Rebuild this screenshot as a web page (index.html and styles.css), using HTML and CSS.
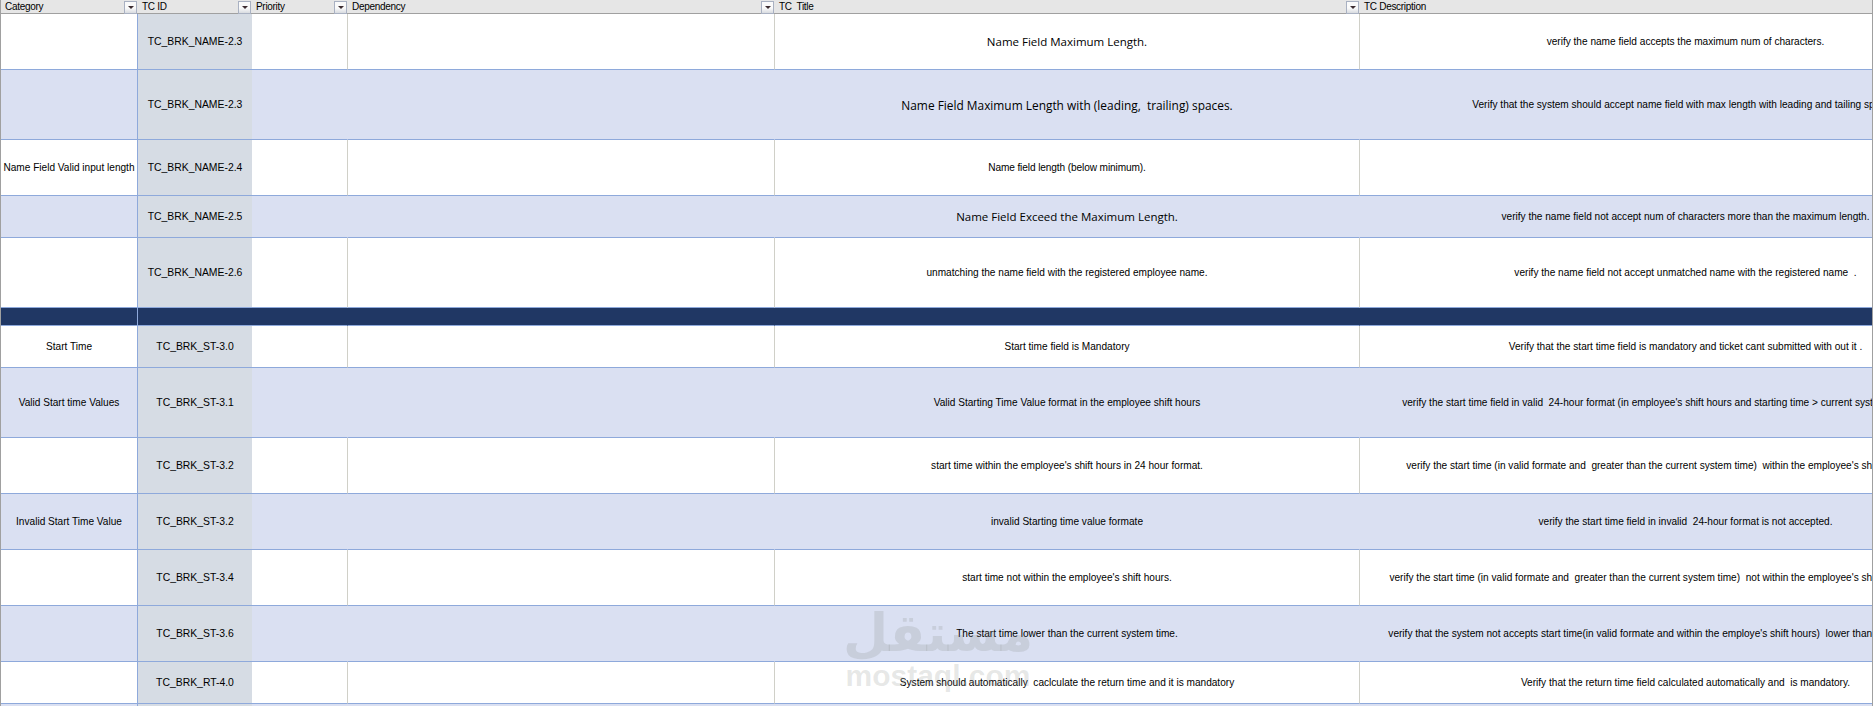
FILE: index.html
```html
<!DOCTYPE html>
<html lang="en">
<head>
<meta charset="utf-8">
<title>Test cases</title>
<link rel="stylesheet" href="styles.css">
</head>
<body>
<main class="sheet">
<table class="grid">
<colgroup><col class="c-cat"><col class="c-id"><col class="c-pri"><col class="c-dep"><col class="c-title"><col class="c-desc"></colgroup>
<thead>
<tr>
<th><span class="hd">Category</span><span class="flt"><i></i></span></th>
<th><span class="hd">TC ID</span><span class="flt"><i></i></span></th>
<th><span class="hd">Priority</span><span class="flt"><i></i></span></th>
<th><span class="hd">Dependency</span><span class="flt"><i></i></span></th>
<th><span class="hd">TC&nbsp; Title</span><span class="flt"><i></i></span></th>
<th><span class="hd">TC Description</span></th>
</tr>
</thead>
<tbody>
<tr class="h56"><td></td><td class="id">TC_BRK_NAME-2.3</td><td></td><td></td><td class="cal">Name Field Maximum Length.</td><td>verify the name field accepts the maximum num of characters.</td></tr>
<tr class="h70 band"><td></td><td class="id">TC_BRK_NAME-2.3</td><td></td><td></td><td class="cal cal-lg">Name Field Maximum Length with (leading,&nbsp; trailing) spaces.</td><td>Verify that the system should accept name field with max length with leading and tailing spaces.</td></tr>
<tr class="h56"><td>Name Field Valid input length</td><td class="id">TC_BRK_NAME-2.4</td><td></td><td></td><td class="tight">Name field length (below minimum).</td><td></td></tr>
<tr class="h42 band"><td></td><td class="id">TC_BRK_NAME-2.5</td><td></td><td></td><td class="cal">Name Field Exceed the Maximum Length.</td><td>verify the name field not accept num of characters more than the maximum length.</td></tr>
<tr class="h70"><td></td><td class="id">TC_BRK_NAME-2.6</td><td></td><td></td><td>unmatching the name field with the registered employee name.</td><td>verify the name field not accept unmatched name with the registered name&nbsp; .</td></tr>
<tr class="h18 navy"><td></td><td></td><td></td><td></td><td></td><td></td></tr>
<tr class="h42"><td>Start Time</td><td class="id">TC_BRK_ST-3.0</td><td></td><td></td><td>Start time field is Mandatory</td><td>Verify that the start time field is mandatory and ticket cant submitted with out it .</td></tr>
<tr class="h70 band"><td>Valid Start time Values</td><td class="id">TC_BRK_ST-3.1</td><td></td><td></td><td>Valid Starting Time Value format in the employee shift hours</td><td>verify the start time field in valid&nbsp; 24-hour format (in employee's shift hours and starting time &gt; current system time) is accepted.</td></tr>
<tr class="h56"><td></td><td class="id">TC_BRK_ST-3.2</td><td></td><td></td><td>start time within the employee's shift hours in 24 hour format.</td><td>verify the start time (in valid formate and&nbsp; greater than the current system time)&nbsp; within the employee's shift hours is accepted.</td></tr>
<tr class="h56 band"><td>Invalid Start Time Value</td><td class="id">TC_BRK_ST-3.2</td><td></td><td></td><td>invalid Starting time value formate</td><td>verify the start time field in invalid&nbsp; 24-hour format is not accepted.</td></tr>
<tr class="h56"><td></td><td class="id">TC_BRK_ST-3.4</td><td></td><td></td><td>start time not within the employee's shift hours.</td><td>verify the start time (in valid formate and&nbsp; greater than the current system time)&nbsp; not within the employee's shift hours is not accepted.</td></tr>
<tr class="h56 band"><td></td><td class="id">TC_BRK_ST-3.6</td><td></td><td></td><td>The start time lower than the current system time.</td><td>verify that the system not accepts start time(in valid formate and within the employe's shift hours)&nbsp; lower than the current system time.</td></tr>
<tr class="h42"><td></td><td class="id">TC_BRK_RT-4.0</td><td></td><td></td><td>System should automatically&nbsp; caclculate the return time and it is mandatory</td><td>Verify that the return time field calculated automatically and&nbsp; is mandatory.</td></tr>
<tr class="h42 band"><td></td><td></td><td></td><td></td><td></td><td></td></tr>
</tbody>
</table>
<div class="mark"><span class="mark-ar" dir="rtl" lang="ar">مستقل</span><span class="mark-en">mostaql.com</span></div>
</main>
</body>
</html>
```
FILE: styles.css
```css
html, body { margin: 0; height: 100%; overflow: hidden; background: #fff; }
.sheet {
  position: relative;
  width: 1871px;
  height: 706px;
  overflow: hidden;
  border-left: 1px solid #a0a0a0;
  border-right: 1px solid #a0a0a0;
  font-family: "Liberation Sans", Arial, sans-serif;
  font-size: 10.1px;
  color: #000;
}
.grid {
  table-layout: fixed;
  border-collapse: separate;
  border-spacing: 0;
  width: 2010px;
}
.c-cat { width: 137px; }
.c-id { width: 114px; }
.c-pri { width: 96px; }
.c-dep { width: 427px; }
.c-title { width: 585px; }
.c-desc { width: 651px; }
th {
  height: 13px;
  padding: 0;
  background: #e6e6e6;
  border-bottom: 1px solid #a0a0a0;
  font-size: 10px;
  letter-spacing: -.3px;
  font-weight: 400;
  text-align: left;
  position: relative;
  line-height: 13px;
  white-space: nowrap;
}
.hd { display: block; padding-left: 4px; }
.flt {
  position: absolute;
  right: 1px;
  top: 1px;
  width: 11px;
  height: 11px;
  background: linear-gradient(#fafafa 55%, #d8dbe0);
  border: 1px solid #a9b1c2;
}
.flt i {
  position: absolute;
  left: 3px;
  top: 4px;
  width: 0;
  height: 0;
  border-left: 3px solid transparent;
  border-right: 3px solid transparent;
  border-top: 3px solid #3c2c30;
}
td {
  padding: 0;
  text-align: center;
  vertical-align: middle;
  white-space: nowrap;
  overflow: hidden;
  border-bottom: 1px solid #8ea9db;
  border-right: 1px solid #d0d0c8;
}
td:nth-child(1) { border-right-color: #8ea9db; }
td:nth-child(2) { background: #d6dce4; border-right: 0; }
td:last-child { border-right: 0; }
td.id { font-size: 10.4px; }
td.cal { font-family: "Open Sans", "Liberation Sans", sans-serif; font-size: 11.5px; }
td.cal-lg { font-size: 11.9px; }
td.tight { letter-spacing: -.1px; }
.h18 td { height: 17px; }
.h42 td { height: 41px; }
.h56 td { height: 55px; }
.h70 td { height: 69px; }
.band td { background: #dae0f2; border-right-color: #dae0f2; }
.band td:nth-child(1) { border-right-color: #8ea9db; }
.band td:nth-child(2) { background: #d6dce4; }
.navy td { background: #203764; border-right-color: #203764; }
.navy td:nth-child(1) { border-right-color: #8ea9db; }
.navy td:nth-child(2) { background: #203764; }
.mark {
  position: absolute;
  left: 843px;
  top: 604px;
  width: 188px;
  display: flex;
  flex-direction: column;
  align-items: center;
  color: rgba(130, 135, 130, .2);
  font-weight: 700;
  pointer-events: none;
}
.mark-ar { font-family: "DejaVu Sans", sans-serif; font-size: 52px; line-height: 58px; }
.mark-en { font-family: "Liberation Sans", sans-serif; font-size: 30px; line-height: 28px; }
```
